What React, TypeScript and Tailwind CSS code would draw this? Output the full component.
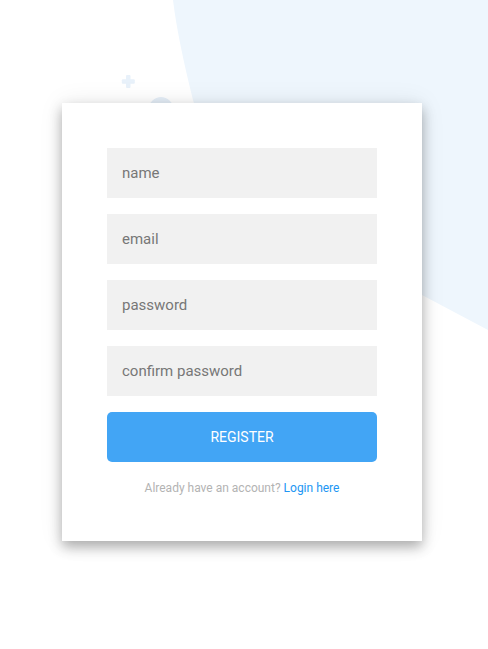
import React from "react";

function Field({ label }: { label: string }) {
  return (
    <div className="h-[50px] bg-[#f1f1f1] flex items-center pl-[15px] text-[15px] text-[#777777]">
      {label}
    </div>
  );
}

export default function App() {
  return (
    <div
      className="relative w-[488px] h-[649px] overflow-hidden bg-white"
      style={{ fontFamily: "Roboto, 'Liberation Sans', sans-serif" }}
    >
      <svg
        className="absolute inset-0"
        width="488"
        height="649"
        viewBox="0 0 488 649"
      >
        <path
          d="M173 0 Q177.6 38.5 193 100 Q214 185 422 295 L488 330 L488 0 Z"
          fill="#eef6fd"
        />
        <rect x="126" y="75" width="4.5" height="13" rx="1" fill="#e8f1fa" />
        <rect x="121.8" y="79.3" width="13" height="4.5" rx="1" fill="#e8f1fa" />
        <circle cx="161" cy="109" r="12" fill="#e6eff8" />
      </svg>

      <div className="relative pt-[103px] pl-[62px]">
        <div className="w-[360px] h-[438px] bg-white px-[45px] pt-[45px] shadow-[0_6px_12px_rgba(0,0,0,0.3),0_0_24px_rgba(0,0,0,0.08)]">
          <div className="flex flex-col gap-[16px]">
            <Field label="name" />
            <Field label="email" />
            <Field label="password" />
            <Field label="confirm password" />
            <button className="h-[50px] w-full rounded-[5px] bg-[#42a5f5] text-white text-[14px] uppercase">
              Register
            </button>
          </div>
          <p className="mt-[17px] text-center text-[12px] text-[#b3b3b3]">
            Already have an account?{" "}
            <span className="text-[#2196f3]">Login here</span>
          </p>
        </div>
      </div>
    </div>
  );
}
